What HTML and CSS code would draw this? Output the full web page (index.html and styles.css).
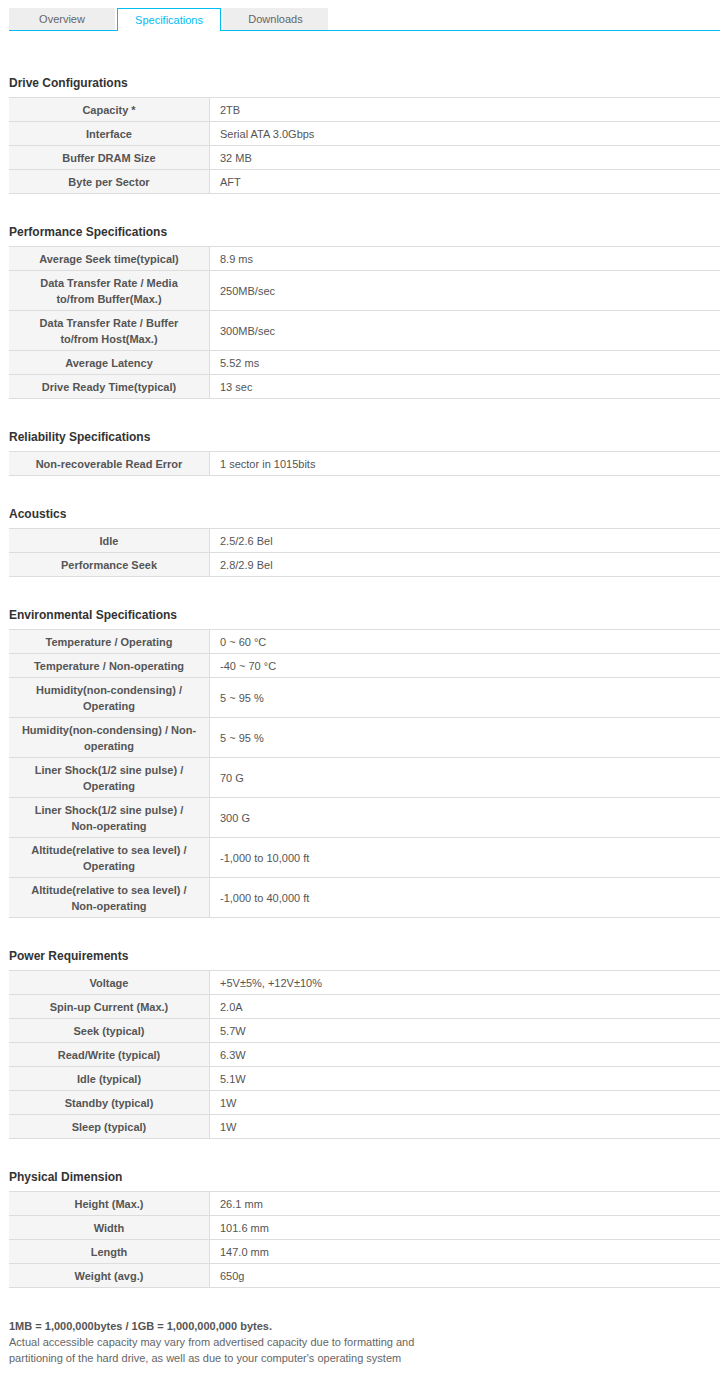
FILE: index.html
```html
<!DOCTYPE html>
<html lang="en">
<head>
<meta charset="utf-8">
<title>Specifications</title>
<link rel="stylesheet" href="styles.css">
</head>
<body>
<div class="page">
  <nav class="tabs">
    <a class="tab tab-overview">Overview</a>
    <a class="tab tab-active">Specifications</a>
    <a class="tab tab-downloads">Downloads</a>
  </nav>

  <section class="section">
    <h2 class="title">Drive Configurations</h2>
    <dl class="spec">
      <dt class="k">Capacity *</dt><dd class="v">2TB</dd>
      <dt class="k">Interface</dt><dd class="v">Serial ATA 3.0Gbps</dd>
      <dt class="k">Buffer DRAM Size</dt><dd class="v">32 MB</dd>
      <dt class="k">Byte per Sector</dt><dd class="v">AFT</dd>
    </dl>
  </section>

  <section class="section">
    <h2 class="title">Performance Specifications</h2>
    <dl class="spec">
      <dt class="k">Average Seek time(typical)</dt><dd class="v">8.9 ms</dd>
      <dt class="k">Data Transfer Rate / Media to/from Buffer(Max.)</dt><dd class="v">250MB/sec</dd>
      <dt class="k">Data Transfer Rate / Buffer to/from Host(Max.)</dt><dd class="v">300MB/sec</dd>
      <dt class="k">Average Latency</dt><dd class="v">5.52 ms</dd>
      <dt class="k">Drive Ready Time(typical)</dt><dd class="v">13 sec</dd>
    </dl>
  </section>

  <section class="section">
    <h2 class="title">Reliability Specifications</h2>
    <dl class="spec">
      <dt class="k">Non-recoverable Read Error</dt><dd class="v">1 sector in 1015bits</dd>
    </dl>
  </section>

  <section class="section">
    <h2 class="title">Acoustics</h2>
    <dl class="spec">
      <dt class="k">Idle</dt><dd class="v">2.5/2.6 Bel</dd>
      <dt class="k">Performance Seek</dt><dd class="v">2.8/2.9 Bel</dd>
    </dl>
  </section>

  <section class="section">
    <h2 class="title">Environmental Specifications</h2>
    <dl class="spec">
      <dt class="k">Temperature / Operating</dt><dd class="v">0 ~ 60 °C</dd>
      <dt class="k">Temperature / Non-operating</dt><dd class="v">-40 ~ 70 °C</dd>
      <dt class="k">Humidity(non-condensing) / Operating</dt><dd class="v">5 ~ 95 %</dd>
      <dt class="k">Humidity(non-condensing) / Non-operating</dt><dd class="v">5 ~ 95 %</dd>
      <dt class="k">Liner Shock(1/2 sine pulse) / Operating</dt><dd class="v">70 G</dd>
      <dt class="k">Liner Shock(1/2 sine pulse) / Non-operating</dt><dd class="v">300 G</dd>
      <dt class="k">Altitude(relative to sea level) / Operating</dt><dd class="v">-1,000 to 10,000 ft</dd>
      <dt class="k">Altitude(relative to sea level) / Non-operating</dt><dd class="v">-1,000 to 40,000 ft</dd>
    </dl>
  </section>

  <section class="section">
    <h2 class="title">Power Requirements</h2>
    <dl class="spec">
      <dt class="k">Voltage</dt><dd class="v">+5V±5%, +12V±10%</dd>
      <dt class="k">Spin-up Current (Max.)</dt><dd class="v">2.0A</dd>
      <dt class="k">Seek (typical)</dt><dd class="v">5.7W</dd>
      <dt class="k">Read/Write (typical)</dt><dd class="v">6.3W</dd>
      <dt class="k">Idle (typical)</dt><dd class="v">5.1W</dd>
      <dt class="k">Standby (typical)</dt><dd class="v">1W</dd>
      <dt class="k">Sleep (typical)</dt><dd class="v">1W</dd>
    </dl>
  </section>

  <section class="section">
    <h2 class="title">Physical Dimension</h2>
    <dl class="spec">
      <dt class="k">Height (Max.)</dt><dd class="v">26.1 mm</dd>
      <dt class="k">Width</dt><dd class="v">101.6 mm</dd>
      <dt class="k">Length</dt><dd class="v">147.0 mm</dd>
      <dt class="k">Weight (avg.)</dt><dd class="v">650g</dd>
    </dl>
  </section>

  <footer class="note">
    <p class="note-strong">1MB = 1,000,000bytes / 1GB = 1,000,000,000 bytes.</p>
    <p class="note-text">Actual accessible capacity may vary from advertised capacity due to formatting and<br>partitioning of the hard drive, as well as due to your computer's operating system</p>
  </footer>
</div>
</body>
</html>
```

FILE: styles.css
```css
html, body {
  margin: 0;
  padding: 0;
  background: #ffffff;
}

body {
  font-family: "Liberation Sans", Arial, sans-serif;
  font-size: 11px;
  color: #555555;
}

.page {
  padding: 8px 0 40px 9px;
}

.tabs {
  display: flex;
  align-items: flex-end;
  gap: 2px;
  border-bottom: 1px solid #00bdf2;
}

.tab {
  display: block;
  box-sizing: border-box;
  height: 22px;
  line-height: 22px;
  text-align: center;
  background: #eeeeee;
  color: #666666;
  font-size: 11px;
}

.tab-overview {
  width: 106px;
}

.tab-downloads {
  width: 105px;
}

.tab-active {
  width: 104px;
  height: 23px;
  margin-bottom: -1px;
  line-height: 23px;
  background: #ffffff;
  color: #00bdf2;
  border: 1px solid #00bdf2;
  border-bottom: 0;
}

.section {
  margin-top: 44px;
}

.section + .section {
  margin-top: 30px;
}

.title {
  margin: 0 0 6px;
  font-size: 12px;
  line-height: 16px;
  font-weight: bold;
  color: #333333;
}

.spec {
  display: grid;
  grid-template-columns: 201px 1fr;
  margin: 0;
  border-top: 1px solid #dddddd;
}

.k,
.v {
  display: flex;
  align-items: center;
  box-sizing: border-box;
  margin: 0;
  padding: 4px 10px 3px;
  line-height: 16px;
  border-bottom: 1px solid #dddddd;
}

.k {
  justify-content: center;
  text-align: center;
  padding-left: 12px;
  padding-right: 12px;
  background: #f5f5f5;
  border-right: 1px solid #dddddd;
  font-weight: bold;
  color: #555555;
}

.v {
  color: #555555;
}

.note {
  margin-top: 30px;
  line-height: 16px;
}

.note p {
  margin: 0;
}

.note-strong {
  font-weight: bold;
  color: #555555;
}

.note-text {
  color: #666666;
}
```
